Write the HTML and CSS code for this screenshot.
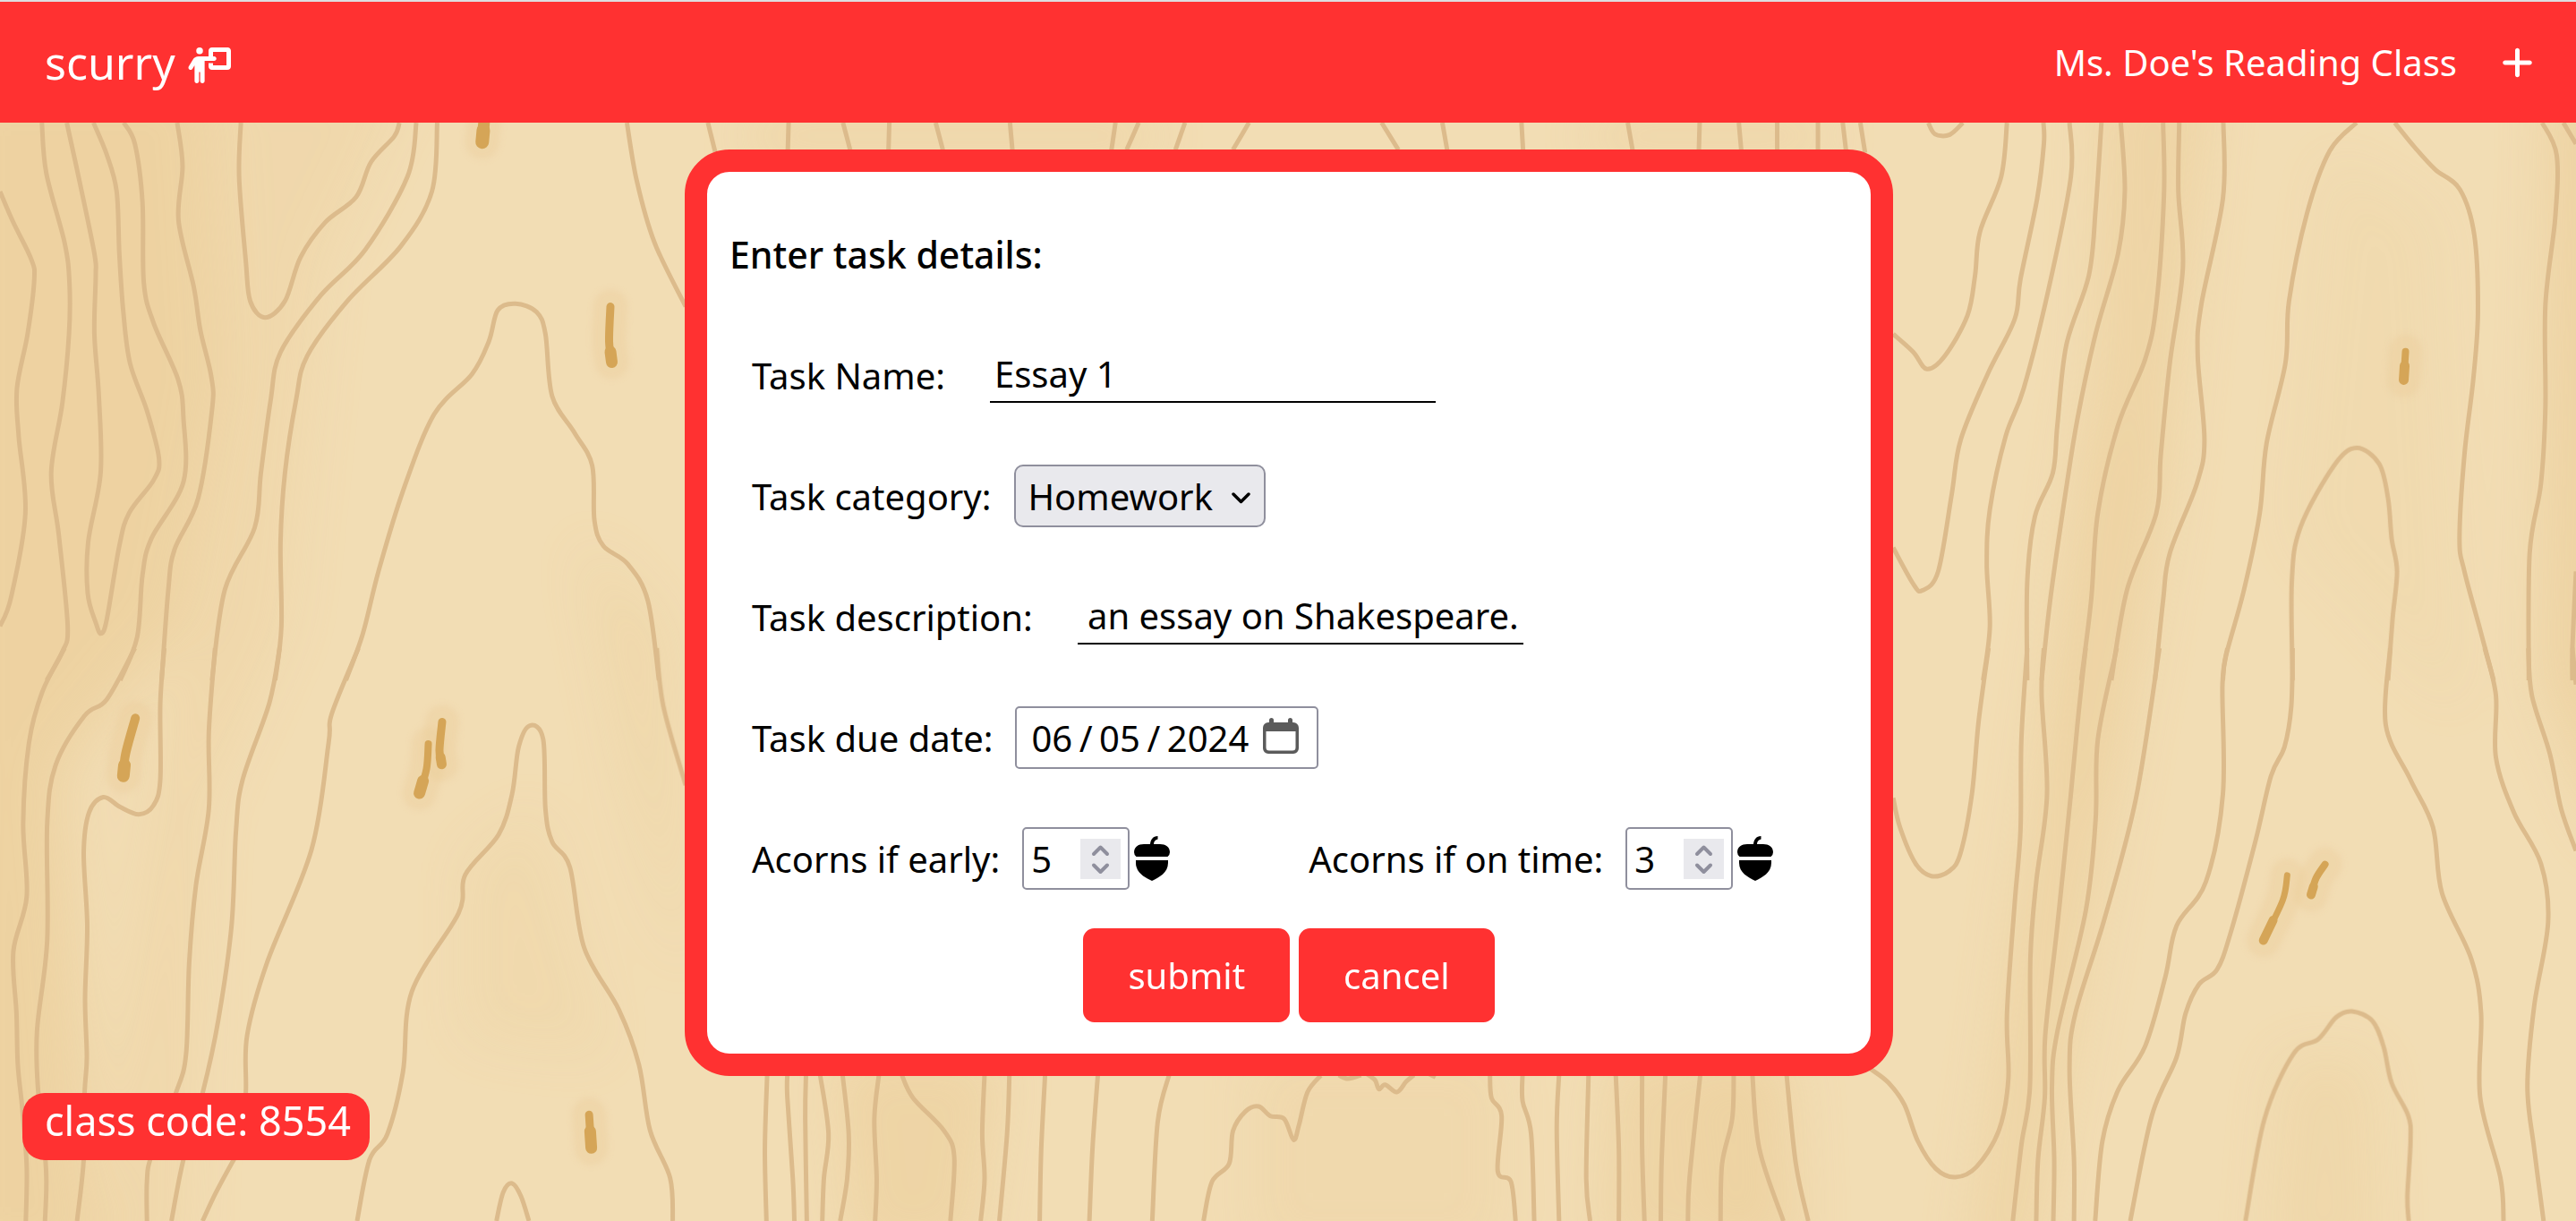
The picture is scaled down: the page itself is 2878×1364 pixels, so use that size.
FILE: index.html
```html
<!DOCTYPE html>
<html lang="en">
<head>
<meta charset="utf-8">
<title>scurry</title>
<link rel="stylesheet" href="styles.css">
</head>
<body>
<svg class="wood" viewBox="0 0 2878 1364" aria-hidden="true">
  <defs>
    <filter id="soft" x="-50%" y="-20%" width="200%" height="140%"><feGaussianBlur stdDeviation="30"/></filter>
    <filter id="halo" x="-100%" y="-50%" width="300%" height="200%"><feGaussianBlur stdDeviation="3"/></filter>
    <symbol id="acorn" viewBox="0 0 40 50">
      <path d="M2.5 23Q0 21 0 18C0 12 5 9 11 9H18C18.500 4 21 0 26.500 0V3.500C23.500 4.500 22 6 22 9H29C35 9 40 12 40 18Q40 21 37.500 23Z"/>
      <path d="M2 27H38V30C38 41 28 46 20 50C12 46 2 41 2 30Z"/>
    </symbol>
  </defs>
  <g class="shade" filter="url(#soft)">
    <path d="M-60 80H230L250 420L200 700L70 860L110 1420H-60Z"/>
    <path d="M230 80H460L360 300L320 700L230 900L210 1420H100L200 700Z" opacity=".45"/>
    <path d="M100 400H180L160 600L110 640Z" opacity=".6"/>
    <path d="M650 600L740 700L765 1100L700 860Z" opacity=".5"/>
    <path d="M520 960L600 900L680 1180L520 1160Z" opacity=".35"/>
    <path d="M840 137H1290V167H840Z"/>
    <path d="M1780 137H2040V167H1780Z"/>
    <path d="M930 1180H1120L1090 1400H950Z" opacity=".8"/>
    <path d="M1400 1180H1680L1680 1400H1400Z" opacity=".4"/>
    <path d="M1800 1180H2000L2010 1400H1790Z" opacity=".8"/>
    <path d="M1900 1180H1970L1980 1400H1920Z"/>
    <path d="M2350 80H2470L2420 560L2350 960L2270 1420H2200L2290 760L2340 400Z" opacity=".8"/>
    <path d="M2350 480H2400L2350 900H2300Z" opacity=".7"/>
    <path d="M2600 170L2720 240L2750 800L2560 600Z" opacity=".25"/>
    <path d="M2550 1180L2650 1180L2660 1420H2530Z" opacity=".5"/>
    <path d="M2850 80H2920V960L2840 760Z"/>
  </g>
  <g id="halos" class="halos" filter="url(#halo)"></g>
  <g id="grain" class="grain"></g>
  <g id="knots" class="knots"></g>
</svg>

<div class="page">
  <header class="topbar">
    <div class="brand">
      <span>scurry</span>
      <svg class="brand-icon" viewBox="0 0 640 512"><path d="M192 96a48 48 0 1 0 0-96 48 48 0 1 0 0 96zm-8 384V352h16V480c0 17.700 14.300 32 32 32s32-14.300 32-32V192h56 64 16c17.700 0 32-14.300 32-32s-14.300-32-32-32H384V64H576V256H384V224H320v48c0 26.500 21.500 48 48 48H592c26.500 0 48-21.500 48-48V48c0-26.500-21.500-48-48-48H368c-26.500 0-48 21.500-48 48v80H243.100 177.100c-33.700 0-64.900 17.700-82.300 46.600l-58.300 97c-9.100 15.100-4.200 34.800 10.900 43.900s34.800 4.200 43.900-10.900L120 256.900V480c0 17.700 14.300 32 32 32s32-14.300 32-32z"/></svg>
    </div>
    <div class="account">
      <span>Ms. Doe's Reading Class</span>
      <svg class="plus-icon" viewBox="0 0 448 512"><path d="M256 80c0-17.700-14.300-32-32-32s-32 14.300-32 32V224H48c-17.700 0-32 14.300-32 32s14.300 32 32 32H192V432c0 17.700 14.300 32 32 32s32-14.300 32-32V288H400c17.700 0 32-14.300 32-32s-14.300-32-32-32H256V80z"/></svg>
    </div>
  </header>

  <main class="card">
    <h1 class="title">Enter task details:</h1>
    <div class="row">
      <span>Task Name:</span>
      <input class="line-input" type="text" value="Essay 1">
    </div>
    <div class="row">
      <span>Task category:</span>
      <div class="select">
        <span>Homework</span>
        <svg class="chevron" viewBox="0 0 21 13"><path d="M2 2L10.500 10.500L19 2"/></svg>
      </div>
    </div>
    <div class="row">
      <span>Task description:</span>
      <input class="line-input at-end" type="text" value="an essay on Shakespeare.">
    </div>
    <div class="row">
      <span>Task due date:</span>
      <div class="date">
        <span>06</span><span class="slash">/</span><span>05</span><span class="slash">/</span><span>2024</span>
        <svg class="calendar" viewBox="0 0 40 40"><path fill-rule="evenodd" d="M7 5V2.500A2.500 2.500 0 0 1 12 2.500V5H28V2.500A2.500 2.500 0 0 1 33 2.500V5H34A6 6 0 0 1 40 11V34A6 6 0 0 1 34 40H6A6 6 0 0 1 0 34V11A6 6 0 0 1 6 5ZM3.500 15V33A3.500 3.500 0 0 0 7 36.500H33A3.500 3.500 0 0 0 36.500 33V15Z"/></svg>
      </div>
    </div>
    <div class="row">
      <div class="acorns early">
        <span>Acorns if early:</span>
        <div class="number"><span>5</span><svg class="spinner" viewBox="0 0 45 45"><path d="M15 17L22.500 9.500L30 17M15 29.500L22.500 37L30 29.500"/></svg></div>
        <svg class="acorn"><use href="#acorn"/></svg>
      </div>
      <div class="acorns">
        <span>Acorns if on time:</span>
        <div class="number"><span>3</span><svg class="spinner" viewBox="0 0 45 45"><path d="M15 17L22.500 9.500L30 17M15 29.500L22.500 37L30 29.500"/></svg></div>
        <svg class="acorn"><use href="#acorn"/></svg>
      </div>
    </div>
    <div class="actions">
      <button class="btn" type="button">submit</button>
      <button class="btn" type="button">cancel</button>
    </div>
  </main>

  <footer class="class-code">class code: 8554</footer>
</div>
<script src="grain.js"></script>
</body>
</html>
```
FILE: styles.css
```css
* { box-sizing: border-box; }

body {
  margin: 0;
  height: 1364px;
  overflow: hidden;
  background: #f2ddb4;
  font: 40px "Noto Sans", sans-serif;
  color: #000;
}

.wood {
  position: absolute;
  inset: 0;
  width: 2878px;
  height: 1364px;
}

.shade { fill: #e8c68c; opacity: .45; }
.grain path { fill: none; stroke: #dcbb8c; stroke-width: 5; vector-effect: non-scaling-stroke; }
.knots path { fill: none; stroke: #d5a557; stroke-linecap: round; vector-effect: non-scaling-stroke; }
.halos path { fill: none; stroke: #ebcb98; stroke-width: 38; stroke-linecap: round; opacity: .35; vector-effect: non-scaling-stroke; }

.page {
  position: relative;
  display: flex;
  flex-direction: column;
  height: 1364px;
  border-top: 2px solid #dedee0;
}

.topbar {
  display: flex;
  align-items: center;
  justify-content: space-between;
  height: 135px;
  padding: 0 48px 0 50px;
  background: #ff3131;
  color: #fff;
  flex: none;
}

.topbar svg { fill: currentColor; }

.brand { display: flex; align-items: center; font-size: 50px; }
.brand-icon { width: 50px; height: 40px; margin: 6px 0 0 12px; }
.account { display: flex; align-items: center; gap: 50px; }
.plus-icon { width: 35px; height: 40px; }

.card {
  display: flex;
  flex-direction: column;
  align-self: center;
  flex: none;
  width: 1350px;
  height: 1035px;
  margin: 30px 0 0 2px;
  padding: 57px 25px 0;
  border: 25px solid #ff3131;
  border-radius: 50px;
  background: #fff;
}

.title {
  margin: 0 0 65px;
  font-size: 41px;
  font-weight: 500;
  line-height: 70px;
}

.row {
  display: flex;
  align-items: center;
  height: 70px;
  margin-bottom: 65px;
  padding-left: 25px;
  white-space: nowrap;
}

.row:nth-last-child(2) { margin-bottom: 43px; }

.line-input {
  width: 498px;
  height: 62px;
  margin: 0 0 0 50px;
  padding: 0 5px 1px;
  border: 0;
  border-bottom: 2px solid #000;
  background: none;
  font: inherit;
  color: inherit;
}

.at-end { text-align: right; }

.select {
  display: flex;
  align-items: center;
  justify-content: space-between;
  width: 281px;
  height: 70px;
  margin-left: 26px;
  padding: 0 15px 0 13px;
  border: 2px solid #8f8f9d;
  border-radius: 10px;
  background: #e9e9ed;
}

.chevron { width: 21px; height: 13px; margin-top: 4px; fill: none; stroke: #000; stroke-width: 3.500; stroke-linecap: round; stroke-linejoin: round; }

.date {
  display: flex;
  align-items: center;
  width: 339px;
  height: 70px;
  margin-left: 25px;
  padding-left: 16px;
  border: 2px solid #8f8f9d;
  border-radius: 5px;
}

.slash { margin: 0 7.500px; }
.calendar { width: 40px; height: 40px; margin: -4px 0 0 16px; fill: #5b5b5b; }

.acorns { display: flex; align-items: center; }
.early { margin-right: 155px; }

.number {
  display: flex;
  align-items: center;
  justify-content: space-between;
  width: 120px;
  height: 70px;
  margin-left: 25px;
  padding: 0 8px;
  border: 2px solid #8f8f9d;
  border-radius: 5px;
}

.spinner { width: 45px; height: 45px; background: #e9e9ed; fill: none; stroke: #8f8f9d; stroke-width: 4; stroke-linecap: round; stroke-linejoin: round; }
.acorn { width: 40px; height: 50px; margin-left: 5px; }

.actions { display: flex; justify-content: center; gap: 10px; }

.btn {
  height: 105px;
  padding: 0 50px;
  border: 0;
  border-radius: 12.500px;
  background: #ff3131;
  color: #fff;
  font: inherit;
}

.class-code {
  align-self: flex-start;
  width: 388px;
  height: 75px;
  margin: 19px 0 0 25px;
  padding: 0 25px;
  border-radius: 25px;
  background: #ff3131;
  color: #fff;
  font-size: 45px;
  line-height: 61px;
  white-space: nowrap;
}
```
FILE: grain.js
```js
// Wood grain: each panel lists its contour lines as "x,y x,y ..." in the panel's own units.
const panels = [
  { at: 'translate(0,120) scale(.49745,.40816)', lines: [
    '0,230 30,315 70,415 77,470 62,620 38,770 42,900 57,1110 25,1340 0,1420',
    '94,42 104,180 145,370 156,480 155,620 140,810 115,1000 132,1170 152,1420 140,1490 105,1568',
    '150,42 180,210 212,400 215,460 212,620 222,790 226,1000 198,1190 197,1330 215,1410 227,1440 240,1400 268,1200 290,1110 345,1020 357,960 330,830 292,700 277,560 268,400 262,230 240,130 210,42',
    '278,42 303,100 320,260 323,480 345,590 400,745 412,850 412,1025 340,1180 320,1280 308,1450 270,1568',
    '398,42 410,160 401,310 435,490 450,610 475,740 476,830 445,1070 392,1210 378,1320 363,1568',
    '541,42 537,190 552,420 562,530 595,575 640,530 675,410 730,315 800,245 833,150 885,80 897,42',
    '935,42 915,190 820,390 720,515 630,670 608,800 586,1000 572,1150 505,1320 476,1568',
    '982,42 970,230 900,380 780,530 690,680 665,800 640,1000 630,1190 632,1420 618,1568',
    '777,1568 815,1440 850,1270 905,1050 975,840 1060,730 1098,640 1118,555 1158,537 1205,560 1225,620 1240,790 1290,890 1330,980 1335,1130 1355,1200 1410,1250 1455,1350 1480,1568',
    '1408,42 1430,200 1470,370 1540,545' ],
    knots: [['1088,30 1083,95', 13, 15], ['1371,545 1368,640 1374,697', 9, 13]] },
  { at: 'translate(0,724) scale(.49745,.40816)', lines: [
    '145,0 95,120 65,260 52,480 60,680 30,830 37,1000 40,1140 50,1260 60,1420 58,1568',
    '303,0 240,140 190,185 125,320 106,480 106,800 83,1050 86,1218 102,1400 104,1480 101,1568',
    '369,0 360,150 360,360 345,430 312,455 270,435 232,408 200,450 188,560 196,760 191,960 195,1120 190,1218 188,1400 173,1568',
    '483,0 469,230 469,440 440,650 425,860 418,1110 395,1218 340,1390 330,1460 330,1568',
    '628,0 605,150 545,360 530,500 520,760 490,1020 455,1218 412,1400 385,1568',
    '805,0 745,180 738,260 700,550 600,860 555,1060 552,1218 540,1370 525,1400 485,1490 455,1568',
    '802,1568 830,1400 870,1330 905,1160 925,940 1030,725 1045,620 1120,510 1150,400 1165,270 1190,212 1220,250 1225,440 1240,530 1280,600 1312,820 1390,990 1435,1140 1460,1320 1505,1450 1511,1568',
    '1475,0 1490,160 1540,375',
    '1115,1568 1130,1490 1150,1465 1170,1500 1188,1568' ],
    knots: [['304,192 282,290 277,350', 10, 14], ['993,202 987,280 992,318', 9, 11], ['962,262 958,330 942,397', 8, 13], ['1323,1277 1328,1368', 9, 13]] },
  { at: 'translate(2090,120) scale(.50255,.40816)', lines: [
    '128,42 143,73 175,75 205,42',
    '50,620 95,670 125,716 165,680 215,570 232,460 243,340 290,190 303,42',
    '50,1205 95,1305 115,1322 150,1270 180,1060 200,910 260,730 320,580 333,470 370,250 385,100 384,42',
    '442,42 445,190 395,500 340,770 300,900 265,1100 258,1250 265,1420 250,1568',
    '513,42 500,280 485,460 435,650 415,870 405,1000 365,1120 348,1300 348,1568',
    '556,42 565,230 550,400 500,620 460,850 435,1040 400,1340 380,1568',
    '650,42 652,240 635,540 610,690 550,870 505,1110 490,1350 468,1568',
    '686,42 684,230 694,440 665,700 645,950 635,1110 570,1320 535,1568',
    '784,42 783,250 735,540 727,680 742,910 725,1030 665,1220 650,1350 632,1568',
    '1080,42 1020,120 970,290 930,530 922,700 880,920 865,1110 830,1320 790,1500 783,1568',
    '1165,42 1210,110 1255,170 1310,225 1342,350 1350,560 1340,740 1320,950 1309,1180 1320,1270 1355,1430 1385,1568',
    '938,1568 936,1300 955,1150 1030,980 1080,932 1130,975 1150,1070 1158,1180 1170,1270 1160,1400 1150,1568',
    '1493,42 1525,130 1522,300 1500,540 1500,820 1490,1030 1465,1220 1463,1568',
    '1540,42 1568,100',
    '1568,1270 1560,1480 1560,1568' ],
    knots: [['1189,668 1185,746', 8, 11]] },
  { at: 'translate(2090,724) scale(.50255,.40816)', lines: [
    '262,0 240,200 225,400 200,560 175,610 135,624 100,590 65,490 50,410',
    '348,0 335,250 333,500 320,700 303,1000 306,1180 285,1320 235,1420 188,1448 145,1425 105,1350 75,1250 40,1190 0,1152',
    '385,0 380,130 392,400 368,640 355,850 354,1200 335,1360 316,1568',
    '478,0 462,180 445,400 415,760 388,1060 387,1230 372,1400 368,1568',
    '547,0 505,250 500,470 478,720 415,1050 403,1200 408,1400 406,1568',
    '642,0 590,410 520,740 455,1000 442,1150 452,1400 452,1568',
    '793,0 782,100 783,400 745,640 680,760 655,900 610,1090 550,1210 515,1350 499,1568',
    '938,0 935,160 920,270 890,350 855,530 800,780 770,880 730,920 700,1000 680,1120 625,1280 577,1568',
    '1155,0 1145,210 1200,360 1250,490 1270,670 1335,850 1357,1000 1355,1230 1400,1450 1407,1568',
    '1365,0 1390,130 1390,300 1430,450 1490,590 1506,750 1475,980 1460,1200 1475,1370 1496,1568',
    '1462,0 1470,130 1510,290 1535,440 1568,555',
    '1560,0 1568,100',
    '833,1568 875,1290 940,1110 995,1070 1035,1010 1070,994 1115,1020 1140,1090 1158,1190 1195,1280 1200,1350 1193,1500 1196,1568' ],
    knots: [['926,622 916,690 873,800', 7, 10], ['1010,592 990,630 979,675', 8, 10]] },
  { at: 'translate(760,1000) scale(.86735,.33333)', lines: [
    '112,600 109,850 111,1092',
    '138,600 138,680 145,950 147,1092',
    '162,600 161,750 163,1092',
    '180,600 191,800 185,950 183,1092',
    '209,600 217,800 215,950 206,1092',
    '256,600 250,750 253,950 251,1092',
    '285,600 300,680 340,790 353,880 348,1092',
    '392,600 389,800 392,950 387,1092',
    '424,600 421,800 411,1092',
    '470,600 465,850 463,1092',
    '538,600 531,850 527,1092',
    '630,600 615,760 608,1092',
    '674,1092 685,960 707,900 712,790 728,725 745,708 760,740 778,750 790,820 797,770 808,660 825,605',
    '848,603 860,615 877,603',
    '885,600 895,620 900,650 908,635 923,660 935,625 945,603',
    '965,600 973,610',
    '1043,600 1045,680 1058,740 1053,925 1070,960 1076,1092',
    '1085,600 1085,690 1096,800 1100,1092',
    '1132,600 1129,780 1132,1092',
    '1170,600 1167,950 1172,1092',
    '1205,600 1209,850 1209,1092',
    '1239,600 1239,850 1242,1092',
    '1269,600 1264,900 1263,1092',
    '1314,600 1300,950 1298,1092',
    '1357,600 1355,750 1342,900 1340,1092',
    '1381,600 1390,850 1421,1092',
    '1425,600 1437,900 1453,1092' ], knots: [] },
  { at: 'translate(740,130) scale(.89286,.33333)', lines: [
    '57,21 66,118', '158,21 157,112', '226,21 235,112', '284,21 283,112', '342,21 351,112',
    '435,21 438,112', '567,21 562,112', '596,21 581,112', '654,21 642,112', '734,21 714,112',
    '900,21 921,112', '976,21 982,112', '1075,21 1077,112', '1208,21 1214,112', '1298,21 1297,112',
    '1347,21 1350,112', '1395,21 1395,112', '1446,21 1446,112', '1477,21 1481,112', '1499,21 1505,122' ], knots: [] }
];

const NS = 'http://www.w3.org/2000/svg';

// Catmull-Rom spline through the points, written as cubic Bézier segments.
function smooth(text) {
  const p = text.split(' ').map(s => s.split(',').map(Number));
  let d = 'M' + p[0];
  for (let i = 0; i < p.length - 1; i++) {
    const a = p[i - 1] || p[i], b = p[i], c = p[i + 1], e = p[i + 2] || c;
    d += 'C' + [b[0] + (c[0] - a[0]) / 6, b[1] + (c[1] - a[1]) / 6,
      c[0] - (e[0] - b[0]) / 6, c[1] - (e[1] - b[1]) / 6, c[0], c[1]].map(n => n.toFixed(1));
  }
  return d;
}

function add(parent, at, points, width) {
  const path = document.createElementNS(NS, 'path');
  path.setAttribute('d', smooth(points));
  path.setAttribute('transform', at);
  if (width) path.setAttribute('stroke-width', width);
  document.getElementById(parent).appendChild(path);
}

for (const { at, lines, knots } of panels) {
  for (const line of lines) add('grain', at, line);
  for (const [points, thin, thick] of knots) {
    add('halos', at, points);
    add('knots', at, points, thin);
    // The lower end of a knot is thicker than its tip.
    const [x1, y1] = points.split(' ').at(-2).split(',').map(Number);
    const [x2, y2] = points.split(' ').at(-1).split(',').map(Number);
    const mid = [(x1 + x2) / 2, (y1 + y2) / 2];
    add('knots', at, mid + ' ' + x2 + ',' + y2, thick);
  }
}
```
